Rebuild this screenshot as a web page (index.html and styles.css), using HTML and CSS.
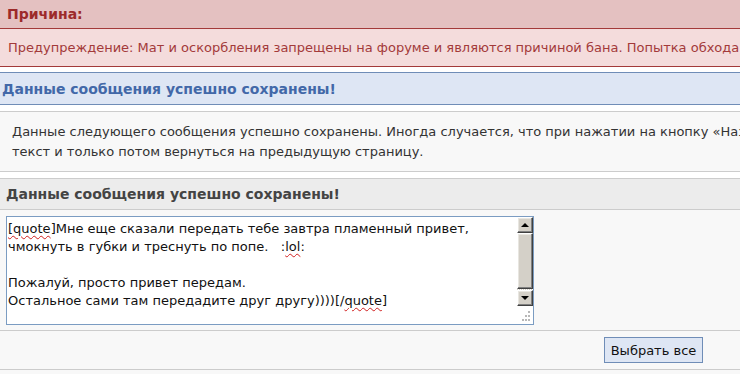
FILE: index.html
```html
<!DOCTYPE html>
<html lang="ru">
<head>
<meta charset="utf-8">
<title>Данные сообщения успешно сохранены</title>
<link rel="stylesheet" href="styles.css">
</head>
<body>
<div class="page">
  <section class="warn">
    <h3 class="warn-title">Причина:</h3>
    <p class="warn-body">Предупреждение: Мат и оскорбления запрещены на форуме и являются причиной бана. Попытка обхода фильтра мата также наказывается.</p>
  </section>

  <section class="info">
    <h2 class="info-title">Данные сообщения успешно сохранены!</h2>
  </section>

  <section class="note">
    <p class="note-text">Данные следующего сообщения успешно сохранены. Иногда случается, что при нажатии на кнопку «Назад» браузер теряет<br>текст и только потом вернуться на предыдущую страницу.</p>
  </section>

  <section class="panel">
    <h3 class="panel-head">Данные сообщения успешно сохранены!</h3>
    <div class="panel-body">
      <div class="textbox">
        <div class="textbox-content"><span class="spell">[quote</span>]Мне еще сказали передать тебе завтра пламенный привет,<br>чмокнуть в губки и треснуть по попе.&nbsp;&nbsp; :<span class="spell">lol</span>:<br><br>Пожалуй, просто привет передам.<br>Остальное сами там передадите друг другу))))[/<span class="spell">quote</span>]</div>
        <div class="scrollbar">
          <div class="sb-btn"><span class="arrow-up"></span></div>
          <div class="sb-thumb"></div>
          <div class="sb-track"></div>
          <div class="sb-btn"><span class="arrow-down"></span></div>
          <div class="grip">
            <svg width="16" height="17" viewBox="0 0 16 17">
              <g fill="#b8b8b8">
                <rect x="11" y="4" width="2" height="2"/>
                <rect x="8" y="8" width="2" height="2"/>
                <rect x="11" y="8" width="2" height="2"/>
                <rect x="5" y="12" width="2" height="2"/>
                <rect x="8" y="12" width="2" height="2"/>
                <rect x="11" y="12" width="2" height="2"/>
              </g>
            </svg>
          </div>
        </div>
      </div>
    </div>
    <div class="panel-foot">
      <button class="btn" type="button">Выбрать все</button>
    </div>
  </section>
</div>
</body>
</html>
```

FILE: styles.css
```css
html, body {
  margin: 0;
  padding: 0;
  overflow: hidden;
  background: #ffffff;
}

body {
  font-family: "DejaVu Sans", Verdana, sans-serif;
  font-size: 13px;
  color: #333333;
}

.page {
  width: 740px;
  height: 374px;
  display: flex;
  flex-direction: column;
  background: #ffffff;
}

h2, h3, p {
  margin: 0;
}

/* red warning */
.warn {
  display: flex;
  flex-direction: column;
}

.warn-title {
  height: 28px;
  display: flex;
  align-items: center;
  padding-left: 7px;
  background: #e4c1c1;
  border-bottom: 1px solid #a33a3a;
  color: #9c2a2a;
  font-size: 14px;
  font-weight: bold;
}

.warn-body {
  height: 37px;
  display: flex;
  align-items: center;
  padding-left: 8px;
  background: #f4dcdc;
  border-bottom: 1px solid #a33a3a;
  color: #a33a3a;
  white-space: nowrap;
}

/* blue info */
.info {
  margin-top: 5px;
  border-top: 1px solid #6f8db7;
  border-bottom: 1px solid #6f8db7;
  background: #dee6f4;
}

.info-title {
  height: 31px;
  display: flex;
  align-items: center;
  padding-left: 2px;
  color: #4268a8;
  font-size: 14px;
  font-weight: bold;
  white-space: nowrap;
}

/* gray note */
.note {
  margin-top: 6px;
  border-top: 1px solid #cccccc;
  border-bottom: 1px solid #cccccc;
  background: #f8f8f8;
}

.note-text {
  padding: 10px 0 9px 12px;
  line-height: 20px;
  white-space: nowrap;
  color: #333333;
}

/* panel with textarea */
.panel {
  margin-top: 6px;
  border-top: 1px solid #cccccc;
  background: #f8f8f8;
  flex: 1;
}

.panel-head {
  height: 30px;
  display: flex;
  align-items: center;
  padding-left: 6px;
  background: #ececec;
  border-bottom: 1px solid #cccccc;
  color: #444444;
  font-size: 14px;
  font-weight: bold;
  white-space: nowrap;
}

.panel-body {
  padding: 6px 0 5px 6px;
  border-bottom: 1px solid #cccccc;
}

.textbox {
  width: 526px;
  height: 107px;
  display: flex;
  border: 1px solid #7b9cc2;
  background: #ffffff;
}

.textbox-content {
  flex: 1;
  padding: 3px 0 0 1px;
  line-height: 18px;
  color: #111111;
  white-space: nowrap;
  overflow: hidden;
}

.spell {
  text-decoration: underline wavy #d02020;
  text-decoration-thickness: 1px;
  text-underline-offset: 2px;
}

.scrollbar {
  width: 16px;
  display: flex;
  flex-direction: column;
  background: #ffffff;
}

.sb-btn,
.sb-thumb {
  box-sizing: border-box;
  background: #d4d0c8;
  border-top: 1px solid #ffffff;
  border-left: 1px solid #ffffff;
  border-right: 1px solid #404040;
  border-bottom: 1px solid #404040;
  box-shadow: inset -1px -1px 0 #808080, inset 1px 1px 0 #e8e6e0;
}

.sb-btn {
  height: 16px;
  display: flex;
  align-items: center;
  justify-content: center;
}

.sb-thumb {
  height: 56px;
}

.sb-track {
  height: 1px;
  background: repeating-linear-gradient(90deg, #d4d0c8 0 1px, #ffffff 1px 2px);
}

.arrow-up {
  width: 0;
  height: 0;
  border-left: 4px solid transparent;
  border-right: 4px solid transparent;
  border-bottom: 4px solid #000000;
}

.arrow-down {
  width: 0;
  height: 0;
  border-left: 4px solid transparent;
  border-right: 4px solid transparent;
  border-top: 4px solid #000000;
}

.grip {
  flex: 1;
  display: flex;
  align-items: flex-end;
}

.grip svg {
  display: block;
}

.panel-foot {
  height: 38px;
  display: flex;
  align-items: center;
  justify-content: flex-end;
  padding-right: 37px;
  border-bottom: 1px solid #cccccc;
}

.btn {
  width: 99px;
  height: 26px;
  padding: 0;
  border: 1px solid #6f8db7;
  background: #dee6f4;
  color: #111111;
  font-family: "DejaVu Sans", Verdana, sans-serif;
  font-size: 13px;
  border-radius: 0;
}
```
